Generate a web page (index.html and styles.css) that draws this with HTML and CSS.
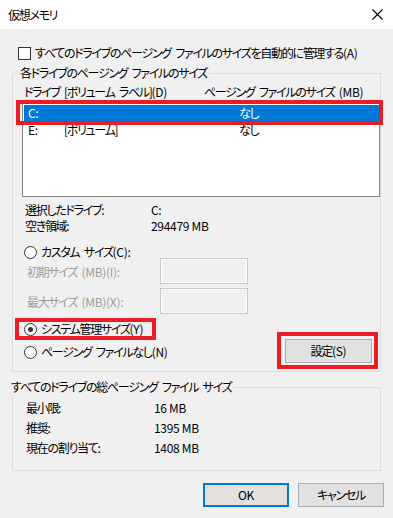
FILE: index.html
```html
<!doctype html>
<html>
<head>
  <meta charset="utf-8">
  <title>仮想メモリ</title>
  <link rel="stylesheet" href="styles.css">
</head>
<body>
  <div class="dialog">
    <div class="titlebar">
      <span class="title">仮想メモリ</span>
      <svg class="close" width="11" height="11" viewBox="0 0 11 11">
        <path d="M0.5 0.5 L10.5 10.5 M10.5 0.5 L0.5 10.5" stroke="#000" stroke-width="1.1" fill="none"/>
      </svg>
    </div>

    <div class="content">
      <div class="auto"><span class="check"></span>すべてのドライブのページング ファイルのサイズを自動的に管理する<span class="num">(A)</span></div>

      <fieldset class="group group-drive">
        <legend>各ドライブのページング ファイルのサイズ</legend>
        <div class="head">
          <span class="c-drive">ドライブ</span>
          <span class="c-label">[ボリューム ラベル]<span class="num">(D)</span></span>
          <span class="c-size">ページング ファイルのサイズ <span class="num">(MB)</span></span>
        </div>
        <div class="listbox">
          <div class="row selected"><span class="c-drive num">C:</span><span class="c-label"></span><span class="c-size">なし</span></div>
          <div class="row"><span class="c-drive num">E:</span><span class="c-label">[ボリューム]</span><span class="c-size">なし</span></div>
        </div>

        <div class="info">
          <div class="kv"><span class="k">選択したドライブ:</span><span class="num">C:</span></div>
          <div class="kv"><span class="k">空き領域:</span><span class="num">294479 MB</span></div>
        </div>

        <div class="radio-row custom"><span class="radio"></span>カスタム サイズ<span class="num">(C):</span></div>
        <div class="size-row first"><span class="dim">初期サイズ <span class="num">(MB)(I):</span></span><span class="box"></span></div>
        <div class="size-row"><span class="dim">最大サイズ <span class="num">(MB)(X):</span></span><span class="box"></span></div>

        <div class="bottom">
          <div class="radios">
            <div class="radio-row"><span class="radio on"></span>システム管理サイズ<span class="num">(Y)</span></div>
            <div class="radio-row"><span class="radio"></span>ページング ファイルなし<span class="num">(N)</span></div>
          </div>
          <button class="btn set">設定<span class="num">(S)</span></button>
        </div>
      </fieldset>

      <fieldset class="group group-total">
        <legend>すべてのドライブの総ページング ファイル サイズ</legend>
        <div class="kv2"><span class="k">最小限:</span><span class="num">16 MB</span></div>
        <div class="kv2"><span class="k">推奨:</span><span class="num">1395 MB</span></div>
        <div class="kv2"><span class="k">現在の割り当て:</span><span class="num">1408 MB</span></div>
      </fieldset>

      <div class="actions">
        <button class="btn ok num">OK</button>
        <button class="btn">キャンセル</button>
      </div>
    </div>

    <!-- annotation boxes -->
    <div class="mark mark-row"></div>
    <div class="mark mark-system"></div>
    <div class="mark mark-set"></div>
  </div>
</body>
</html>
```

FILE: styles.css
```css
html, body {
  margin: 0;
  padding: 0;
}
body {
  font-family: "Noto Sans CJK JP", "Noto Sans", sans-serif;
  font-size: 12px;
  font-feature-settings: "palt";
  letter-spacing: -1.3px;
  word-spacing: 3px;
  color: #000;
  background: #f0f0f0;
}
.num {
  letter-spacing: -0.3px;
  word-spacing: 0;
}
.dialog {
  position: relative;
  width: 393px;
  height: 518px;
  background: #f0f0f0;
  overflow: hidden;
}
.titlebar {
  height: 29px;
  background: #fff;
  display: flex;
  align-items: center;
  justify-content: space-between;
  padding: 0 10px 0 8px;
}
.title {
  line-height: 16px;
  margin-top: 1px;
}
.close {
  display: block;
}
.content {
  padding: 0 12px;
}
.auto {
  margin-top: 16px;
  height: 16px;
  line-height: 16px;
  display: flex;
  align-items: center;
  padding-left: 6px;
  white-space: nowrap;
}
.check {
  width: 11px;
  height: 11px;
  border: 1px solid #333;
  background: #fff;
  margin-right: 4px;
}
.group {
  margin: 4px 0 0;
  padding: 3px 0 8px 9px;
  border: 1px solid #dcdcdc;
  min-width: 0;
}
.group legend {
  padding: 0 2px;
  margin-left: -4px;
  line-height: 16px;
}
.head, .row {
  display: flex;
  height: 16px;
  line-height: 16px;
  white-space: nowrap;
}
.head .c-drive { width: 40px; padding-left: 2px; }
.head .c-label { width: 140px; }
.row .c-drive { width: 36px; padding-left: 5px; }
.row .c-label { width: 175px; }
.listbox {
  margin-top: 3px;
  border: 1px solid #828282;
  background: #fff;
  padding-top: 1px;
  height: 91px;
}
.row + .row {
  margin-top: 1px;
}
.row.selected {
  background: #0078d7;
  color: #fff;
  box-shadow: inset 1px 0 #fff;
}
.info {
  margin-top: 5px;
}
.kv {
  display: flex;
  height: 16px;
  line-height: 16px;
  padding-left: 3px;
}
.kv .k {
  width: 126px;
}
.radio-row {
  display: flex;
  align-items: center;
  height: 16px;
  line-height: 16px;
  padding-left: 2px;
  white-space: nowrap;
}
.radio-row.custom {
  margin-top: 10px;
}
.radio {
  width: 11px;
  height: 11px;
  border: 1px solid #333;
  border-radius: 50%;
  background: #fff;
  margin-right: 4px;
  display: flex;
  align-items: center;
  justify-content: center;
}
.radio.on::after {
  content: "";
  width: 5px;
  height: 5px;
  border-radius: 50%;
  background: #333;
}
.size-row {
  display: flex;
  align-items: center;
  height: 26px;
  margin-top: 4px;
}
.size-row.first {
  margin-top: -2px;
}
.dim {
  color: #9d9d9d;
  width: 133px;
  padding-left: 5px;
}
.box {
  width: 86px;
  height: 24px;
  border: 1px solid #c8c8c8;
  box-shadow: inset 0 0 0 1px #fafafa;
}
.bottom {
  display: flex;
  justify-content: space-between;
  margin-top: 7px;
}
.radios {
  display: flex;
  flex-direction: column;
  gap: 7px;
}
.btn {
  font: inherit;
  font-feature-settings: "palt";
  letter-spacing: -1.3px;
  color: #000;
  background: #e1e1e1;
  border: 1px solid #adadad;
  width: 86px;
  height: 24px;
  padding: 0;
  line-height: 20px;
}
.btn.num {
  letter-spacing: -0.3px;
}
.btn.set {
  width: 87px;
  margin-top: 18px;
  margin-right: 8px;
}
.btn.ok {
  border: 2px solid #0078d7;
}
.group-total {
  margin-top: 7px;
  padding: 3px 0 12px 0;
}
.kv2 {
  display: flex;
  height: 20px;
  line-height: 20px;
  padding-left: 13px;
}
.kv2 .k {
  width: 128px;
}
.actions {
  display: flex;
  justify-content: flex-end;
  gap: 9px;
  margin-top: 12px;
  margin-right: -3px;
}
.mark {
  position: absolute;
  border: 4px solid #ed1c24;
  box-sizing: border-box;
}
.mark-row {
  left: 16px;
  top: 100px;
  width: 367px;
  height: 25px;
}
.mark-system {
  left: 15px;
  top: 318px;
  width: 141px;
  height: 22px;
}
.mark-set {
  left: 277px;
  top: 332px;
  width: 101px;
  height: 37px;
}
```
